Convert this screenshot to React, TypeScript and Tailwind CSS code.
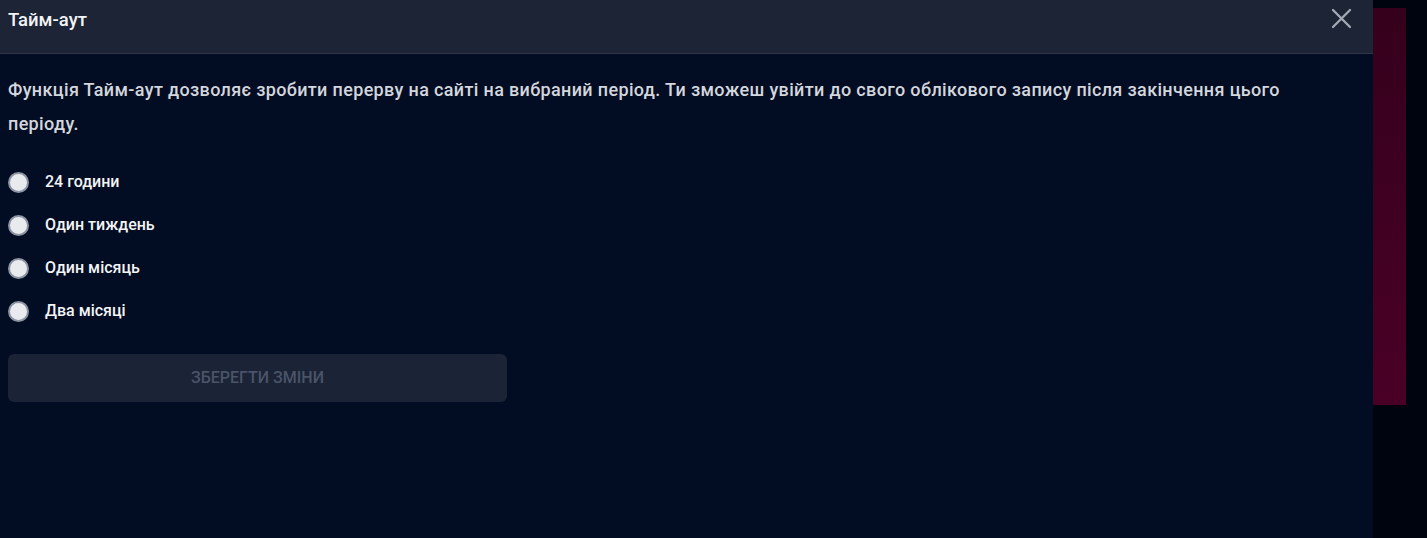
import { useState } from "react";

const options = ["24 години", "Один тиждень", "Один місяць", "Два місяці"];

const App = () => {
  const [picked, setPicked] = useState<string | null>(null);

  return (
    <div className="flex h-[538px] w-[1427px] bg-[#00040f] font-['Roboto','Liberation_Sans',sans-serif]">
      <div className="flex w-[1373px] flex-col bg-[#020c22]">
        <div className="flex h-[54px] items-start justify-between border-b border-[#2e364a] bg-[#1c2436] pl-2 pr-[21px]">
          <h2 className="pt-[8px] text-[18.5px] leading-[24px] font-medium text-[#f3f4f6]">Тайм-аут</h2>
          <button className="mt-[8px] text-[#a3a9b5]" aria-label="close">
            <svg width="21" height="21" viewBox="0 0 21 21" fill="none" stroke="currentColor" strokeWidth="2.3" strokeLinecap="round">
              <path d="M2 2L19 19M19 2L2 19" />
            </svg>
          </button>
        </div>

        <div className="px-2 pt-[19px]">
          <p className="pr-[80px] text-[18px] font-medium leading-[34px] tracking-[0.35px] text-[#d3d6dd]">
            Функція Тайм-аут дозволяє зробити перерву на сайті на вибраний період. Ти зможеш увійти до свого облікового запису після закінчення цього періоду.
          </p>

          <div className="mt-[29px] flex flex-col gap-[19px]">
            {options.map((o) => (
              <label key={o} className="flex h-[24px] cursor-pointer items-center gap-[16px]" onClick={() => setPicked(o)}>
                <span className="flex h-[21px] w-[21px] items-center justify-center rounded-full border-2 border-[#8b93a3] bg-[#e9eaee]">
                  {picked === o && <span className="h-[9px] w-[9px] rounded-full bg-[#020c22]" />}
                </span>
                <span className="text-[16px] font-medium text-[#f3f4f6]">{o}</span>
              </label>
            ))}
          </div>

          <button
            disabled={!picked}
            className="mt-[31px] h-[48px] w-[499px] rounded-[6px] bg-[#1b2336] text-[16px] font-medium text-[#4a5468]"
          >
            ЗБЕРЕГТИ ЗМІНИ
          </button>
        </div>
      </div>

      <div className="pt-[8px]">
        <div className="h-[397px] w-[33px] bg-gradient-to-b from-[#35001c] to-[#4a0026]" />
      </div>
    </div>
  );
};

export default App;
